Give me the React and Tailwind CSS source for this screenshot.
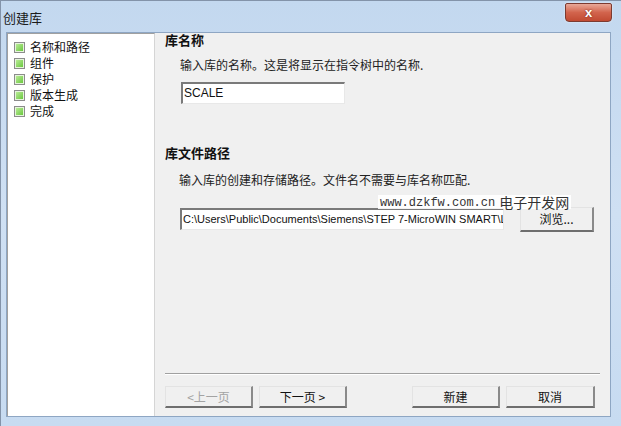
import React from 'react'

const cjk = { fontFamily: '"Noto Sans CJK SC", "Liberation Sans", sans-serif' }
const latin = { fontFamily: '"Liberation Sans", sans-serif' }

function StepBox() {
  return (
    <span className="w-[11px] h-[11px] border border-[#8c8c8c] bg-[#e6f5dc] flex items-center justify-center shrink-0">
      <span className="w-[7px] h-[7px] bg-gradient-to-br from-[#b9ec95] to-[#69c73b]" />
    </span>
  )
}

function Btn({ children, disabled, className = '' }) {
  return (
    <button
      className={`h-[22px] bg-[#f0f0f0] border-t border-l border-t-[#e3e3e3] border-l-[#e3e3e3] border-b-2 border-r-2 border-b-[#6e6e6e] border-r-[#8a8a8a] text-[12px] leading-none ${disabled ? 'text-[#a3a3a3]' : 'text-[#111]'} ${className}`}
      style={cjk}
    >
      {children}
    </button>
  )
}

export default function App() {
  const steps = ['名称和路径', '组件', '保护', '版本生成', '完成']

  return (
    <div className="w-[621px] h-[426px] flex flex-col bg-gradient-to-b from-[#c3d8ef] via-[#cfe0f3] to-[#c7dbf1] border-l border-t border-[#8393a9] overflow-hidden">
      {/* Title bar */}
      <div className="h-[31px] flex items-start justify-between pl-[2px] pr-[9px]">
        <span className="mt-[7px] text-[13px] text-[#1b1b1b]" style={cjk}>创建库</span>
        <div className="mt-[2px] w-[47px] h-[19px] rounded-b-[4px] rounded-t-[2px] border border-[#7c3a30] bg-gradient-to-b from-[#e8a898] via-[#d2644d] to-[#c14a32] flex items-center justify-center shadow-[0_0_2px_rgba(255,255,255,0.8)]">
          <span className="text-white text-[13px] font-bold leading-none" style={{ ...latin, textShadow: '0 0 2px #6b1b10' }}>x</span>
        </div>
      </div>

      {/* Client */}
      <div className="flex flex-1 ml-[5px] mr-[10px] mb-[9px] border border-[#8ea6c3]">
        {/* Left steps pane */}
        <div className="w-[148px] bg-white border-t border-l border-[#a0a0a0] border-r border-r-[#d5d5d5] pt-[5px] pl-[6px]" style={cjk}>
          {steps.map((s) => (
            <div key={s} className="h-[16px] flex items-center gap-[5px] text-[12px] text-[#111] leading-none">
              <StepBox />
              <span>{s}</span>
            </div>
          ))}
        </div>

        {/* Right content */}
        <div className="flex-1 bg-[#f0f0f0] flex flex-col pl-[10px] relative" style={cjk}>
          <div className="text-[13px] font-bold text-[#111] leading-[14px]">库名称</div>
          <div className="mt-[10px] ml-[15px] text-[12px] text-[#222] leading-[16px]">输入库的名称。这是将显示在指令树中的名称.</div>
          <div className="mt-[9px] ml-[16px] w-[164px] h-[22px] bg-white border-t-2 border-l-2 border-t-[#7a7a7a] border-l-[#7a7a7a] border-b border-r border-b-[#e8e8e8] border-r-[#e8e8e8] text-[12px] leading-[18px] px-[1px] text-[#111]" style={latin}>
            SCALE
          </div>

          <div className="mt-[42px] text-[13px] font-bold text-[#111] leading-[14px]">库文件路径</div>
          <div className="mt-[12px] ml-[14px] text-[12px] text-[#222] leading-[16px]">输入库的创建和存储路径。文件名不需要与库名称匹配.</div>

          <div className="mt-[19px] ml-[15px] flex items-start gap-[16px]">
            <div className="mt-[1px] w-[324px] h-[22px] bg-white border-t-2 border-l-2 border-t-[#7a7a7a] border-l-[#7a7a7a] border-b border-r border-b-[#e8e8e8] border-r-[#e8e8e8] text-[11px] leading-[18px] px-[1px] text-[#111] whitespace-nowrap overflow-hidden" style={latin}>
              C:\Users\Public\Documents\Siemens\STEP 7-MicroWIN SMART\L
            </div>
            <Btn className="w-[74px] h-[25px]">浏览...</Btn>
          </div>

          {/* watermark overlay */}
          <div className="absolute left-[223px] top-[162px] flex items-end bg-white/90 px-[2px] leading-none">
            <span className="text-[12px] text-[#333]" style={{ fontFamily: '"Liberation Mono", monospace' }}>www.dzkfw.com.cn</span>
            <span className="ml-[4px] text-[14px] text-[#333]" style={cjk}>电子开发网</span>
          </div>

          <div className="flex-1" />
          <div className="mr-[10px] border-t border-t-[#a0a0a0] border-b border-b-white" />
          <div className="mt-[11px] mb-[8px] flex justify-between pr-[15px]">
            <div className="flex gap-[6px]">
              <Btn disabled className="w-[88px]">&lt;上一页</Btn>
              <Btn className="w-[88px]">下一页 &gt;</Btn>
            </div>
            <div className="flex gap-[6px]">
              <Btn className="w-[88px]">新建</Btn>
              <Btn className="w-[89px]">取消</Btn>
            </div>
          </div>
        </div>
      </div>
    </div>
  )
}
